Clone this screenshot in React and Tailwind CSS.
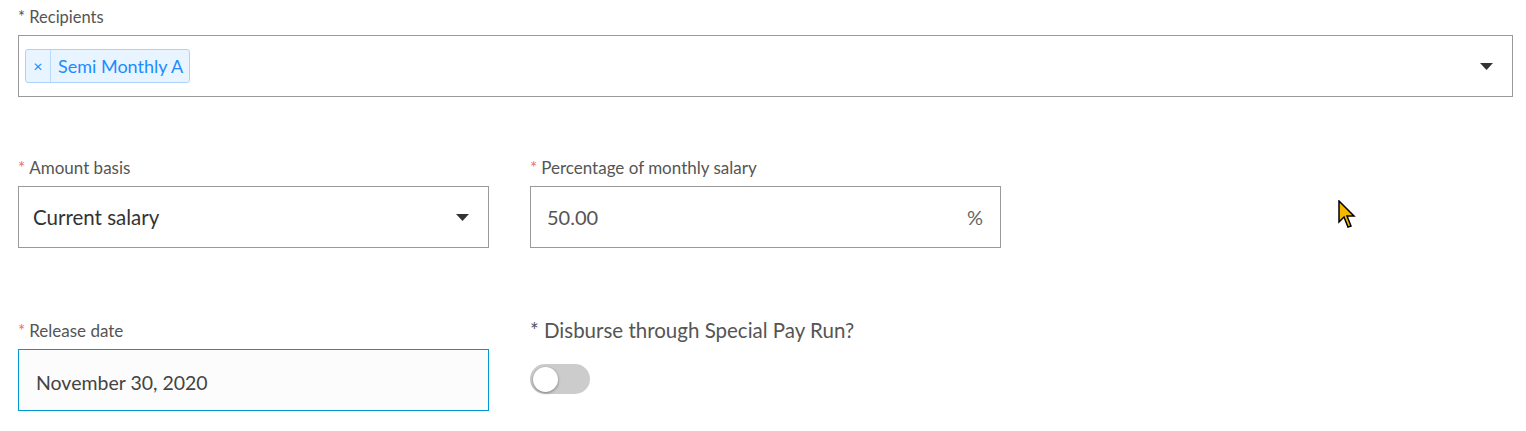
export default function App() {
  const font = { fontFamily: '"Lato", "Open Sans", sans-serif' };
  const Caret = () => (
    <svg width="13" height="7" viewBox="0 0 13 7" className="shrink-0">
      <path d="M0 0 H13 L6.5 7 Z" fill="#333" />
    </svg>
  );
  return (
    <div className="relative w-[1526px] h-[431px] bg-white pl-[18px] text-[#555]" style={font}>
      {/* Recipients */}
      <div className="h-[35px] flex items-center text-[16.5px] text-[#555]">* Recipients</div>
      <div className="w-[1495px] h-[62px] border border-[#9a9a9a] flex items-center pl-[6px] pr-[19px]">
        <div className="flex items-stretch h-[34px] border border-[#a9d3fb] bg-[#e8f4ff] rounded-[3px] text-[#1a8cff]">
          <div className="w-[25px] flex items-center justify-center text-[16px] border-r border-[#b6dbfc]">×</div>
          <div className="flex items-center pl-[7px] pr-[6px] text-[18px]">Semi Monthly A</div>
        </div>
        <div className="flex-1" />
        <Caret />
      </div>

      {/* Row 2 */}
      <div className="flex gap-[41px] mt-[53px]">
        <div className="w-[471px]">
          <div className="h-[36px] flex items-center text-[17px]"><span className="text-[#f0706a] mr-[4px]">*</span>Amount basis</div>
          <div className="h-[62px] border border-[#9a9a9a] flex items-center pl-[14px] pr-[19px] pt-[1px]">
            <span className="flex-1 text-[20.5px] text-[#333]">Current salary</span>
            <Caret />
          </div>
        </div>
        <div className="w-[471px]">
          <div className="h-[36px] flex items-center text-[17px]"><span className="text-[#f0706a] mr-[4px]">*</span>Percentage of monthly salary</div>
          <div className="h-[62px] border border-[#9a9a9a] flex items-center pl-[16px] pr-[17px]">
            <span className="flex-1 text-[20px] text-[#555]">50.00</span>
            <span className="text-[20px] text-[#666]">%</span>
          </div>
        </div>
      </div>

      {/* Row 3 */}
      <div className="flex gap-[41px] mt-[64px]">
        <div className="w-[471px]">
          <div className="h-[37px] flex items-center text-[17px]"><span className="text-[#f0706a] mr-[4px]">*</span>Release date</div>
          <div className="h-[62px] border border-[#0099d6] bg-[#fcfcfc] flex items-center pl-[17px] pt-[5px]">
            <span className="text-[19.5px] text-[#444]">November 30, 2020</span>
          </div>
        </div>
        <div className="w-[471px]">
          <div className="h-[37px] flex items-center text-[20.5px] text-[#555]">* Disburse through Special Pay Run?</div>
          <div className="mt-[15px] w-[60px] h-[30px] rounded-full bg-[#cccccc] flex items-center pl-[3px]">
            <div className="w-[25px] h-[25px] rounded-full bg-white shadow-[0_1px_3px_rgba(0,0,0,0.4)]" />
          </div>
        </div>
      </div>

      {/* mouse cursor */}
      <svg className="absolute left-[1338px] top-[200px]" width="22" height="30" viewBox="0 0 22 30">
        <path d="M1 1 L1 22 L6 17 L10 27 L13 26 L9 16 L16 16 Z" fill="#f5b800" stroke="#000" strokeWidth="1.5" strokeLinejoin="miter" />
      </svg>
    </div>
  );
}
